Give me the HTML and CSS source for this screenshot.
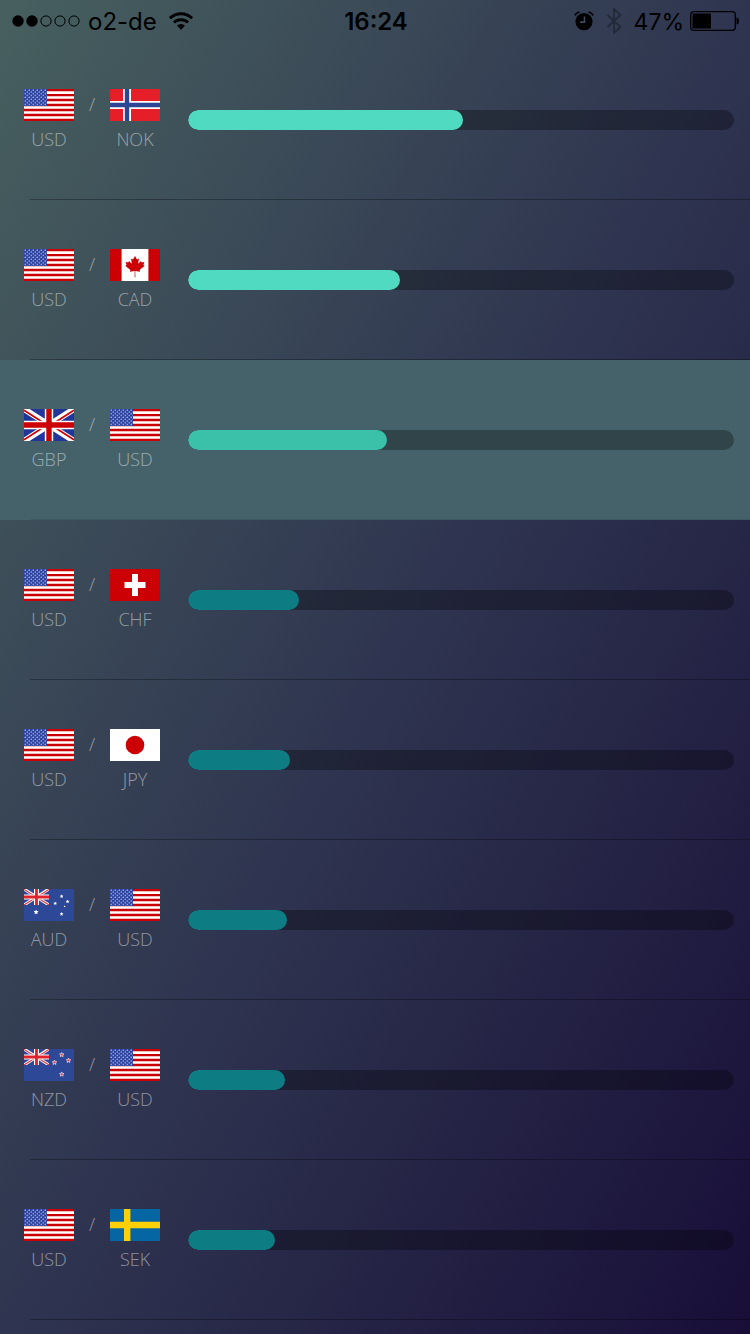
FILE: index.html
```html
<!DOCTYPE html>
<html lang="en">
<head>
<meta charset="utf-8">
<meta name="viewport" content="width=device-width, initial-scale=1">
<title>Currency pairs</title>
<link rel="stylesheet" href="styles.css">
</head>
<body>
<svg class="sprite" aria-hidden="true">
  <defs>
    <pattern id="stars" width="4" height="3.6" patternUnits="userSpaceOnUse">
      <circle cx="1.2" cy="1.1" r=".68" fill="#dfe4fa"/>
      <circle cx="3.2" cy="2.9" r=".68" fill="#dfe4fa"/>
    </pattern>
    <symbol id="us" viewBox="0 0 50 32">
      <path fill="#fff" d="M0 0h50v32H0z"/>
      <path stroke="#cc0004" stroke-width="2.3" d="M0 1.1h50M0 6.1h50M0 11h50M0 16h50M0 21h50M0 26h50M0 30.9h50"/>
      <path fill="#2a41a0" d="M0 0h23v17H0z"/>
      <path fill="url(#stars)" d="M0 0h23v17H0z"/>
    </symbol>
    <symbol id="no" viewBox="0 0 50 32">
      <path fill="#e51e27" d="M0 0h50v32H0z"/>
      <path stroke="#fff" stroke-width="8" d="M17 0v32M0 16h50"/>
      <path stroke="#2c4594" stroke-width="4.4" d="M17 0v32M0 16h50"/>
    </symbol>
    <symbol id="ca" viewBox="0 0 50 32">
      <path fill="#fff" d="M0 0h50v32H0z"/>
      <path fill="#cc0004" d="M0 0h11.6v32H0zM38.4 0H50v32H38.4zM25 7l2 3.6 2-1-.9 5.2 2.9-2.9.6 1.5 2.8-.5-1 3 1.3.8-5.1 4.2.5 1.8-4.8-.7.1 6.2h-.8l.1-6.2-4.8.7.5-1.8-5.1-4.2 1.3-.8-1-3 2.8.5.6-1.5 2.9 2.9-.9-5.2 2 1z"/>
    </symbol>
    <symbol id="gb" viewBox="0 0 50 32">
      <path fill="#20369b" d="M0 0h50v32H0z"/>
      <path stroke="#fff" stroke-width="6" d="M0 0l50 32M50 0L0 32"/>
      <path stroke="#cc0004" stroke-width="1.8" d="M0 1.2l23 14.7M27 16.1l23 14.7M50 1.2L27 15.9M23 16.1L0 30.8"/>
      <path stroke="#fff" stroke-width="8.4" d="M25 0v32M0 16h50"/>
      <path stroke="#cc0004" stroke-width="5.4" d="M25 0v32M0 16h50"/>
    </symbol>
    <symbol id="ch" viewBox="0 0 50 32">
      <path fill="#cc0004" d="M0 0h50v32H0z"/>
      <path fill="#fff" d="M22 5h6v8h7.5v6H28v8h-6v-8h-7.5v-6H22z"/>
    </symbol>
    <symbol id="jp" viewBox="0 0 50 32">
      <path fill="#fff" d="M0 0h50v32H0z"/>
      <circle cx="25" cy="16" r="9.3" fill="#cc0004"/>
    </symbol>
    <symbol id="jack" viewBox="0 0 25 16">
      <path fill="#2c4896" d="M0 0h25v16H0z"/>
      <path stroke="#fff" stroke-width="3" d="M0 0l25 16M25 0L0 16"/>
      <path stroke="#e5303a" stroke-width="1.1" d="M0 .4l25 15.6M25 .4L0 16"/>
      <path stroke="#fff" stroke-width="5" d="M12.5 0v16M0 8h25"/>
      <path stroke="#e0202c" stroke-width="2.8" d="M12.5 0v16M0 8h25"/>
    </symbol>
    <symbol id="star" viewBox="-5 -5 10 10">
      <path d="M0-4.8l1.3 3 3.3.3-2.5 2.2.7 3.3L0 2.3-2.8 4l.7-3.3-2.5-2.2 3.3-.3z"/>
    </symbol>
    <symbol id="au" viewBox="0 0 50 32">
      <path fill="#2c4896" d="M0 0h50v32H0z"/>
      <use href="#jack" width="25" height="16"/>
      <g fill="#fff">
        <use href="#star" x="9.3" y="20.3" width="5.600" height="5.600"/>
        <use href="#star" x="35.500" y="5.200" width="4.200" height="4.200"/>
        <use href="#star" x="29.100" y="12.300" width="4.200" height="4.200"/>
        <use href="#star" x="41.500" y="10.500" width="4.200" height="4.200"/>
        <use href="#star" x="35.500" y="22.900" width="4.200" height="4.200"/>
        <use href="#star" x="39.4" y="16.2" width="2.4" height="2.4"/>
      </g>
    </symbol>
    <symbol id="nz" viewBox="0 0 50 32">
      <path fill="#2c4896" d="M0 0h50v32H0z"/>
      <use href="#jack" width="25" height="16"/>
      <g fill="#e5404c" stroke="#fff" stroke-width="1.2">
        <use href="#star" x="35.2" y="3.2" width="5" height="5"/>
        <use href="#star" x="28" y="11" width="5" height="5"/>
        <use href="#star" x="42" y="9" width="5" height="5"/>
        <use href="#star" x="35.2" y="22.8" width="5" height="5"/>
      </g>
    </symbol>
    <symbol id="se" viewBox="0 0 50 32">
      <path fill="#0566a3" d="M0 0h50v32H0z"/>
      <path stroke="#ffd006" stroke-width="6.4" d="M17.2 0v32M0 16h50"/>
    </symbol>
  </defs>
</svg>

<header class="status">
  <div class="status-side">
    <svg class="signal" viewBox="0 0 68 12" aria-hidden="true">
      <circle cx="6" cy="6" r="5.7"/><circle cx="20" cy="6" r="5.7"/>
      <g fill="none" stroke="#000"><circle cx="34" cy="6" r="5.1"/><circle cx="48" cy="6" r="5.1"/><circle cx="62" cy="6" r="5.1"/></g>
    </svg>
    <span class="carrier">o2-de</span>
    <svg class="wifi" viewBox="0 0 24 18" aria-hidden="true">
      <g fill="none" stroke="#000" stroke-width="3"><path d="M1 6.2a15.8 15.8 0 0 1 22 0"/><path d="M5 10.5a10.2 10.2 0 0 1 14 0"/></g>
      <path d="M8 13.6a5.8 5.8 0 0 1 8 0L12 18z"/>
    </svg>
  </div>
  <time class="clock">16:24</time>
  <div class="status-side status-end">
    <svg class="alarm" viewBox="0 0 20 20" aria-hidden="true">
      <circle cx="10" cy="10.6" r="8.6"/>
      <path fill="none" stroke="#000" stroke-width="1.6" d="M1 4.600a5 5 0 0 1 4.500-3.400M19 4.600a5 5 0 0 0-4.500-3.400"/>
      <path fill="none" stroke="#3a4a5c" stroke-width="1.6" d="M10.5 5.5v5.6H6"/>
    </svg>
    <svg class="bluetooth" viewBox="0 0 16 26" aria-hidden="true">
      <path fill="none" stroke="#212b38" stroke-width="1.8" d="M1.5 7l13 12L8 25V1l6.5 6L1.5 19"/>
    </svg>
    <span class="percent">47%</span>
    <svg class="battery" viewBox="0 0 50 20" aria-hidden="true">
      <rect x=".7" y=".7" width="44.6" height="18.6" rx="3" fill="none" stroke="#000" stroke-width="1.3"/>
      <path d="M2.5 2.5H21v15H2.5zM46.500 6.5q2.5 0 2.5 3.5t-2.5 3.5z"/>
    </svg>
  </div>
</header>

<main>
  <ul class="pairs">
    <li class="pair strong">
      <div class="currencies">
        <div class="currency"><svg class="flag"><use href="#us"/></svg><span>USD</span></div>
        <span class="slash">/</span>
        <div class="currency"><svg class="flag"><use href="#no"/></svg><span>NOK</span></div>
      </div>
      <div class="bar" role="progressbar" aria-label="USD / NOK" aria-valuenow="50"><div class="fill" style="width:50.3%"></div></div>
    </li>
    <li class="pair strong">
      <div class="currencies">
        <div class="currency"><svg class="flag"><use href="#us"/></svg><span>USD</span></div>
        <span class="slash">/</span>
        <div class="currency"><svg class="flag"><use href="#ca"/></svg><span>CAD</span></div>
      </div>
      <div class="bar" role="progressbar" aria-label="USD / CAD" aria-valuenow="39"><div class="fill" style="width:38.8%"></div></div>
    </li>
    <li class="pair selected">
      <div class="currencies">
        <div class="currency"><svg class="flag"><use href="#gb"/></svg><span>GBP</span></div>
        <span class="slash">/</span>
        <div class="currency"><svg class="flag"><use href="#us"/></svg><span>USD</span></div>
      </div>
      <div class="bar" role="progressbar" aria-label="GBP / USD" aria-valuenow="36"><div class="fill" style="width:36.4%"></div></div>
    </li>
    <li class="pair">
      <div class="currencies">
        <div class="currency"><svg class="flag"><use href="#us"/></svg><span>USD</span></div>
        <span class="slash">/</span>
        <div class="currency"><svg class="flag"><use href="#ch"/></svg><span>CHF</span></div>
      </div>
      <div class="bar" role="progressbar" aria-label="USD / CHF" aria-valuenow="20"><div class="fill" style="width:20.4%"></div></div>
    </li>
    <li class="pair">
      <div class="currencies">
        <div class="currency"><svg class="flag"><use href="#us"/></svg><span>USD</span></div>
        <span class="slash">/</span>
        <div class="currency"><svg class="flag"><use href="#jp"/></svg><span>JPY</span></div>
      </div>
      <div class="bar" role="progressbar" aria-label="USD / JPY" aria-valuenow="19"><div class="fill" style="width:18.7%"></div></div>
    </li>
    <li class="pair">
      <div class="currencies">
        <div class="currency"><svg class="flag"><use href="#au"/></svg><span>AUD</span></div>
        <span class="slash">/</span>
        <div class="currency"><svg class="flag"><use href="#us"/></svg><span>USD</span></div>
      </div>
      <div class="bar" role="progressbar" aria-label="AUD / USD" aria-valuenow="18"><div class="fill" style="width:18.1%"></div></div>
    </li>
    <li class="pair">
      <div class="currencies">
        <div class="currency"><svg class="flag"><use href="#nz"/></svg><span>NZD</span></div>
        <span class="slash">/</span>
        <div class="currency"><svg class="flag"><use href="#us"/></svg><span>USD</span></div>
      </div>
      <div class="bar" role="progressbar" aria-label="NZD / USD" aria-valuenow="18"><div class="fill" style="width:17.7%"></div></div>
    </li>
    <li class="pair">
      <div class="currencies">
        <div class="currency"><svg class="flag"><use href="#us"/></svg><span>USD</span></div>
        <span class="slash">/</span>
        <div class="currency"><svg class="flag"><use href="#se"/></svg><span>SEK</span></div>
      </div>
      <div class="bar" role="progressbar" aria-label="USD / SEK" aria-valuenow="16"><div class="fill" style="width:16%"></div></div>
    </li>
  </ul>
</main>
</body>
</html>
```

FILE: styles.css
```css
* {
  box-sizing: border-box;
}

body {
  margin: 0;
  min-height: 100vh;
  background: linear-gradient(to bottom right, #47605f 0%, #2f3550 50%, #180e38 100%);
  font-family: "Open Sans", "Noto Sans", sans-serif;
}

.sprite {
  position: absolute;
  width: 0;
  height: 0;
}

.status {
  display: grid;
  grid-template-columns: 1fr auto 1fr;
  align-items: center;
  height: 40px;
  padding: 0 10px 0 12px;
  font: 24px/40px Inter, Roboto, sans-serif;
  color: #000;
}

.status-side {
  display: flex;
  align-items: center;
  gap: 8px;
}

.status-end {
  justify-content: flex-end;
  gap: 6px;
}

.clock {
  padding-top: 2px;
  font-weight: 600;
}

.carrier,
.percent {
  padding-top: 2px;
}

.percent {
  font-size: 23px;
}

.signal {
  width: 68px;
  height: 12px;
}

.wifi {
  width: 24px;
  height: 18px;
  margin-left: 4px;
}

.alarm {
  width: 20px;
  height: 20px;
}

.bluetooth {
  width: 16px;
  height: 26px;
  margin: 0 6px;
}

.battery {
  width: 50px;
  height: 20px;
}

.pairs {
  margin: 0;
  padding: 0;
  list-style: none;
}

.pair {
  position: relative;
  display: flex;
  align-items: center;
  gap: 28px;
  height: 160px;
  padding: 0 16px 0 24px;
}

.pair::after {
  content: "";
  position: absolute;
  left: 30px;
  right: 0;
  bottom: 0;
  height: 1px;
  background: rgba(0, 0, 0, 0.3);
}

.pair.selected {
  background: #45626b;
}

.pair.selected::after {
  background: #3e5a62;
}

.currencies {
  display: flex;
  font-size: 18px;
  font-weight: 300;
  line-height: 32px;
  color: rgba(255, 255, 255, 0.48);
}

.currency {
  width: 50px;
  height: 62px;
  display: flex;
  flex-direction: column;
  align-items: center;
  gap: 2px;
}

.flag {
  flex: none;
  width: 50px;
  height: 32px;
}

.slash {
  width: 36px;
  line-height: 30px;
  text-align: center;
}

.bar {
  flex: 1;
  height: 20px;
  border-radius: 10px;
  background: rgba(0, 0, 0, 0.3);
  overflow: hidden;
}

.fill {
  height: 100%;
  border-radius: 10px;
  background: #0e7c83;
}

.strong .fill {
  background: #4fdac1;
}

.selected .fill {
  background: #3bc0aa;
}
```
